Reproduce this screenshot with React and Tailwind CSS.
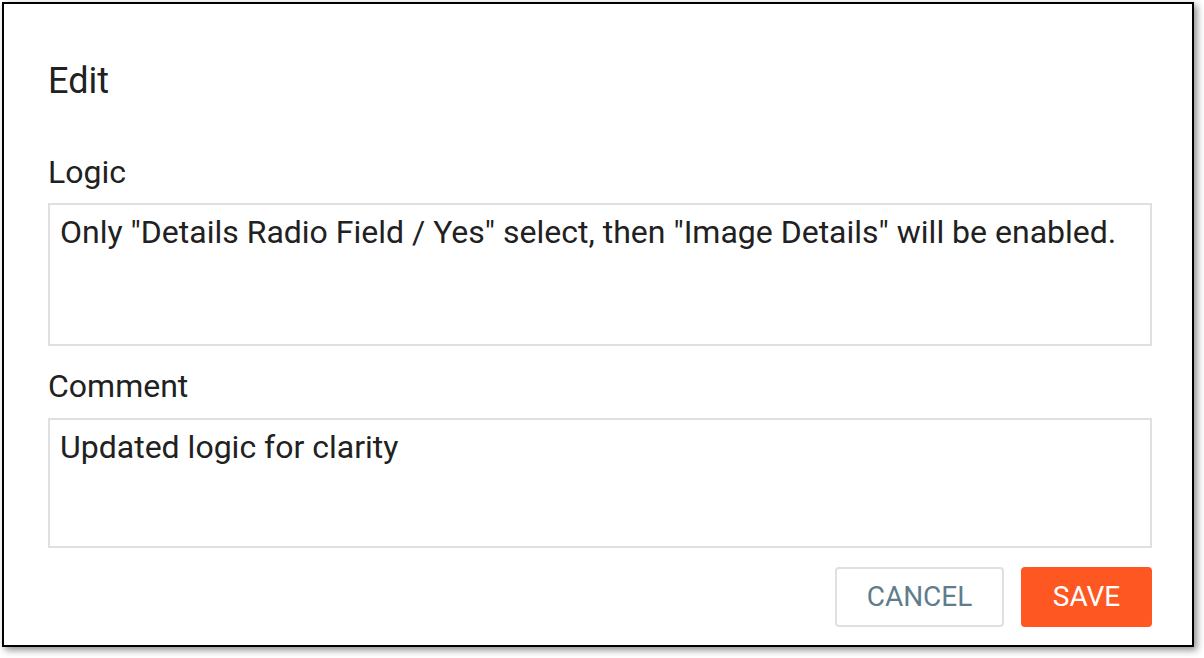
export default function App() {
    return (
        <div className="min-h-screen bg-white p-[2px]" style={{ fontFamily: 'Roboto, "Liberation Sans", sans-serif' }}>
            <div className="w-[1192px] h-[645px] border-2 border-black bg-white shadow-[3px_3px_7px_rgba(0,0,0,0.45)] pt-[56px] pl-[44px] pr-[40px] flex flex-col">
                <h1 className="text-[36px] leading-[42px] text-[#212121] font-normal">Edit</h1>

                <label className="mt-[51px] text-[32px] leading-[38px] text-[#212121]">Logic</label>
                <div className="mt-[12px] h-[143px] border-2 border-[#e0e0e0] px-[10px] pt-[8px] text-[32px] leading-[38px] text-[#212121]">
                    Only "Details Radio Field / Yes" select, then "Image Details" will be enabled.
                </div>

                <label className="mt-[21px] text-[32px] leading-[38px] text-[#212121]">Comment</label>
                <div className="mt-[13px] h-[130px] border-2 border-[#e0e0e0] px-[10px] pt-[8px] text-[32px] leading-[38px] text-[#212121]">
                    Updated logic for clarity
                </div>

                <div className="mt-[19px] flex justify-end gap-[17px]">
                    <button className="w-[169px] h-[60px] border-2 border-[#e0e0e0] rounded-[4px] text-[28px] text-[#607d8b] uppercase">
                        Cancel
                    </button>
                    <button className="w-[131px] h-[60px] rounded-[4px] bg-[#ff5722] text-[28px] text-white uppercase">
                        Save
                    </button>
                </div>
            </div>
        </div>
    );
}
